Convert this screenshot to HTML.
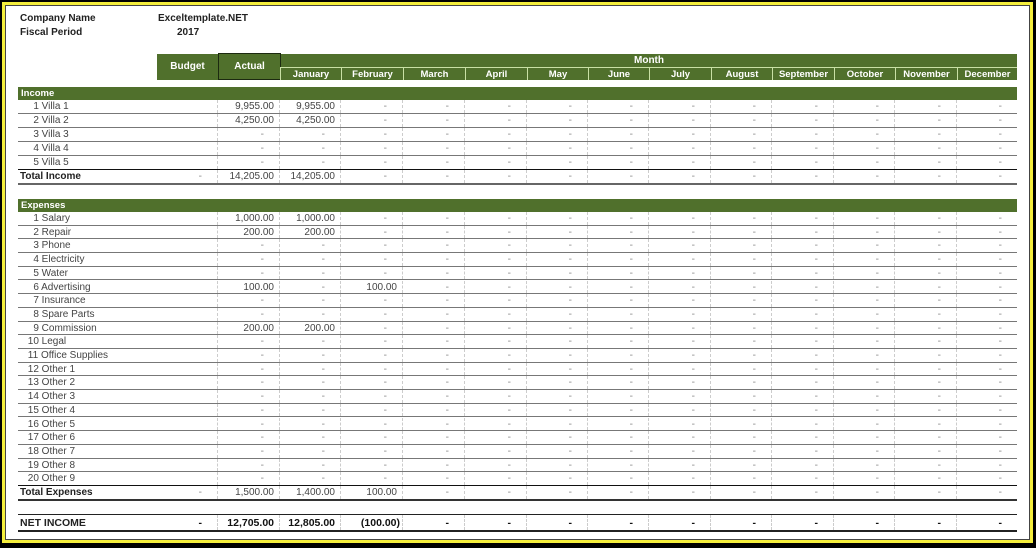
<!DOCTYPE html>
<html><head><meta charset="utf-8"><style>
*{margin:0;padding:0;box-sizing:border-box}
body{width:1036px;height:548px;background:#000;position:relative;overflow:hidden;font-family:"Liberation Sans",sans-serif}
#frame{position:absolute;left:2px;top:2px;width:1031px;height:541px;border:3px solid #f4ee3c;background:#fff}
#frame2{position:absolute;left:5px;top:5px;width:1025px;height:535px;border:1px solid #444}
.abs{position:absolute}
.top{font-size:10px;font-weight:bold;color:#222}
.r{position:absolute;left:18px;width:999px;display:flex;font-size:10px;color:#444;border-bottom:1px solid #777}
.r span{display:block;border-right:1px dashed #ccc;text-align:right;padding-right:5px;white-space:nowrap;overflow:hidden;line-height:13px}
.r span:first-child{text-align:left;border-right:none;padding-left:7px}
.r span.b{padding-left:2px}
.r span:last-child{border-right:none}
.w0{width:139px}.w1{width:61px}.w2{width:62px}
.d{padding-right:15px!important;color:#888}
.hd{position:absolute;left:18px;width:999px;height:13px;background:#50702c;color:#fff;font-weight:bold;font-size:9.5px;padding-left:3px;line-height:13px}
.m{position:absolute;top:67px;height:13px;color:#fff;font-weight:bold;font-size:9.5px;text-align:center;line-height:13px;border-left:1px solid #c9e0a5;border-top:1px solid #c9e0a5}
.b{font-weight:bold;color:#222}
.n span.d{color:#111}
</style></head><body>
<div id="frame"></div><div id="frame2"></div>
<div class="abs top" style="left:20px;top:13px">Company Name</div>
<div class="abs top" style="left:20px;top:27px">Fiscal Period</div>
<div class="abs top" style="left:158px;top:13px">Exceltemplate.NET</div>
<div class="abs top" style="left:177px;top:27px">2017</div>

<div class="abs" style="left:157px;top:54px;width:860px;height:26px;background:#50702c"></div>
<div class="abs" style="left:157px;top:54px;width:61px;height:26px;color:#fff;font-weight:bold;font-size:10px;text-align:center;line-height:26px">Budget</div>
<div class="abs" style="left:218px;top:53px;width:63px;height:27px;border:1px solid #1c2a10;color:#fff;font-weight:bold;font-size:10px;text-align:center;line-height:25px">Actual</div>
<div class="abs" style="left:281px;top:54px;width:736px;height:12px;color:#fff;font-weight:bold;font-size:10px;text-align:center;line-height:13px">Month</div>
<div class="m" style="left:280px;width:61px">January</div>
<div class="m" style="left:341px;width:62px">February</div>
<div class="m" style="left:403px;width:62px">March</div>
<div class="m" style="left:465px;width:62px">April</div>
<div class="m" style="left:527px;width:61px">May</div>
<div class="m" style="left:588px;width:61px">June</div>
<div class="m" style="left:649px;width:62px">July</div>
<div class="m" style="left:711px;width:61px">August</div>
<div class="m" style="left:772px;width:62px">September</div>
<div class="m" style="left:834px;width:61px">October</div>
<div class="m" style="left:895px;width:62px">November</div>
<div class="m" style="left:957px;width:60px">December</div>

<div class="hd" style="top:87px">Income</div>
<div class="hd" style="top:199px">Expenses</div>

<div class="r" style="top:100px;height:14px"><span class="w0">&nbsp;&nbsp;&nbsp;1 Villa 1</span><span class="w1"></span><span class="w2">9,955.00</span><span class="w1">9,955.00</span><span class="w2 d">-</span><span class="w2 d">-</span><span class="w2 d">-</span><span class="w1 d">-</span><span class="w1 d">-</span><span class="w2 d">-</span><span class="w1 d">-</span><span class="w2 d">-</span><span class="w1 d">-</span><span class="w2 d">-</span><span class="w1 d" style="width:60px">-</span></div>
<div class="r" style="top:114px;height:14px"><span class="w0">&nbsp;&nbsp;&nbsp;2 Villa 2</span><span class="w1"></span><span class="w2">4,250.00</span><span class="w1">4,250.00</span><span class="w2 d">-</span><span class="w2 d">-</span><span class="w2 d">-</span><span class="w1 d">-</span><span class="w1 d">-</span><span class="w2 d">-</span><span class="w1 d">-</span><span class="w2 d">-</span><span class="w1 d">-</span><span class="w2 d">-</span><span class="w1 d" style="width:60px">-</span></div>
<div class="r" style="top:128px;height:14px"><span class="w0">&nbsp;&nbsp;&nbsp;3 Villa 3</span><span class="w1"></span><span class="w2 d">-</span><span class="w1 d">-</span><span class="w2 d">-</span><span class="w2 d">-</span><span class="w2 d">-</span><span class="w1 d">-</span><span class="w1 d">-</span><span class="w2 d">-</span><span class="w1 d">-</span><span class="w2 d">-</span><span class="w1 d">-</span><span class="w2 d">-</span><span class="w1 d" style="width:60px">-</span></div>
<div class="r" style="top:142px;height:14px"><span class="w0">&nbsp;&nbsp;&nbsp;4 Villa 4</span><span class="w1"></span><span class="w2 d">-</span><span class="w1 d">-</span><span class="w2 d">-</span><span class="w2 d">-</span><span class="w2 d">-</span><span class="w1 d">-</span><span class="w1 d">-</span><span class="w2 d">-</span><span class="w1 d">-</span><span class="w2 d">-</span><span class="w1 d">-</span><span class="w2 d">-</span><span class="w1 d" style="width:60px">-</span></div>
<div class="r" style="top:156px;height:14px;border-bottom-color:#111"><span class="w0">&nbsp;&nbsp;&nbsp;5 Villa 5</span><span class="w1"></span><span class="w2 d">-</span><span class="w1 d">-</span><span class="w2 d">-</span><span class="w2 d">-</span><span class="w2 d">-</span><span class="w1 d">-</span><span class="w1 d">-</span><span class="w2 d">-</span><span class="w1 d">-</span><span class="w2 d">-</span><span class="w1 d">-</span><span class="w2 d">-</span><span class="w1 d" style="width:60px">-</span></div>
<div class="r" style="top:170px;height:15px;border-bottom:2px solid #666"><span class="w0 b">Total Income</span><span class="w1 d">-</span><span class="w2">14,205.00</span><span class="w1">14,205.00</span><span class="w2 d">-</span><span class="w2 d">-</span><span class="w2 d">-</span><span class="w1 d">-</span><span class="w1 d">-</span><span class="w2 d">-</span><span class="w1 d">-</span><span class="w2 d">-</span><span class="w1 d">-</span><span class="w2 d">-</span><span class="w1 d" style="width:60px">-</span></div>

<div class="r" style="top:212px;height:13.7px"><span class="w0">&nbsp;&nbsp;&nbsp;1 Salary</span><span class="w1"></span><span class="w2">1,000.00</span><span class="w1">1,000.00</span><span class="w2 d">-</span><span class="w2 d">-</span><span class="w2 d">-</span><span class="w1 d">-</span><span class="w1 d">-</span><span class="w2 d">-</span><span class="w1 d">-</span><span class="w2 d">-</span><span class="w1 d">-</span><span class="w2 d">-</span><span class="w1 d" style="width:60px">-</span></div>
<div class="r" style="top:225.7px;height:13.7px"><span class="w0">&nbsp;&nbsp;&nbsp;2 Repair</span><span class="w1"></span><span class="w2">200.00</span><span class="w1">200.00</span><span class="w2 d">-</span><span class="w2 d">-</span><span class="w2 d">-</span><span class="w1 d">-</span><span class="w1 d">-</span><span class="w2 d">-</span><span class="w1 d">-</span><span class="w2 d">-</span><span class="w1 d">-</span><span class="w2 d">-</span><span class="w1 d" style="width:60px">-</span></div>
<div class="r" style="top:239.4px;height:13.7px"><span class="w0">&nbsp;&nbsp;&nbsp;3 Phone</span><span class="w1"></span><span class="w2 d">-</span><span class="w1 d">-</span><span class="w2 d">-</span><span class="w2 d">-</span><span class="w2 d">-</span><span class="w1 d">-</span><span class="w1 d">-</span><span class="w2 d">-</span><span class="w1 d">-</span><span class="w2 d">-</span><span class="w1 d">-</span><span class="w2 d">-</span><span class="w1 d" style="width:60px">-</span></div>
<div class="r" style="top:253.1px;height:13.7px"><span class="w0">&nbsp;&nbsp;&nbsp;4 Electricity</span><span class="w1"></span><span class="w2 d">-</span><span class="w1 d">-</span><span class="w2 d">-</span><span class="w2 d">-</span><span class="w2 d">-</span><span class="w1 d">-</span><span class="w1 d">-</span><span class="w2 d">-</span><span class="w1 d">-</span><span class="w2 d">-</span><span class="w1 d">-</span><span class="w2 d">-</span><span class="w1 d" style="width:60px">-</span></div>
<div class="r" style="top:266.8px;height:13.7px"><span class="w0">&nbsp;&nbsp;&nbsp;5 Water</span><span class="w1"></span><span class="w2 d">-</span><span class="w1 d">-</span><span class="w2 d">-</span><span class="w2 d">-</span><span class="w2 d">-</span><span class="w1 d">-</span><span class="w1 d">-</span><span class="w2 d">-</span><span class="w1 d">-</span><span class="w2 d">-</span><span class="w1 d">-</span><span class="w2 d">-</span><span class="w1 d" style="width:60px">-</span></div>
<div class="r" style="top:280.5px;height:13.7px"><span class="w0">&nbsp;&nbsp;&nbsp;6 Advertising</span><span class="w1"></span><span class="w2">100.00</span><span class="w1 d">-</span><span class="w2">100.00</span><span class="w2 d">-</span><span class="w2 d">-</span><span class="w1 d">-</span><span class="w1 d">-</span><span class="w2 d">-</span><span class="w1 d">-</span><span class="w2 d">-</span><span class="w1 d">-</span><span class="w2 d">-</span><span class="w1 d" style="width:60px">-</span></div>
<div class="r" style="top:294.2px;height:13.7px"><span class="w0">&nbsp;&nbsp;&nbsp;7 Insurance</span><span class="w1"></span><span class="w2 d">-</span><span class="w1 d">-</span><span class="w2 d">-</span><span class="w2 d">-</span><span class="w2 d">-</span><span class="w1 d">-</span><span class="w1 d">-</span><span class="w2 d">-</span><span class="w1 d">-</span><span class="w2 d">-</span><span class="w1 d">-</span><span class="w2 d">-</span><span class="w1 d" style="width:60px">-</span></div>
<div class="r" style="top:307.9px;height:13.7px"><span class="w0">&nbsp;&nbsp;&nbsp;8 Spare Parts</span><span class="w1"></span><span class="w2 d">-</span><span class="w1 d">-</span><span class="w2 d">-</span><span class="w2 d">-</span><span class="w2 d">-</span><span class="w1 d">-</span><span class="w1 d">-</span><span class="w2 d">-</span><span class="w1 d">-</span><span class="w2 d">-</span><span class="w1 d">-</span><span class="w2 d">-</span><span class="w1 d" style="width:60px">-</span></div>
<div class="r" style="top:321.6px;height:13.7px"><span class="w0">&nbsp;&nbsp;&nbsp;9 Commission</span><span class="w1"></span><span class="w2">200.00</span><span class="w1">200.00</span><span class="w2 d">-</span><span class="w2 d">-</span><span class="w2 d">-</span><span class="w1 d">-</span><span class="w1 d">-</span><span class="w2 d">-</span><span class="w1 d">-</span><span class="w2 d">-</span><span class="w1 d">-</span><span class="w2 d">-</span><span class="w1 d" style="width:60px">-</span></div>
<div class="r" style="top:335.3px;height:13.7px"><span class="w0">&nbsp;10 Legal</span><span class="w1"></span><span class="w2 d">-</span><span class="w1 d">-</span><span class="w2 d">-</span><span class="w2 d">-</span><span class="w2 d">-</span><span class="w1 d">-</span><span class="w1 d">-</span><span class="w2 d">-</span><span class="w1 d">-</span><span class="w2 d">-</span><span class="w1 d">-</span><span class="w2 d">-</span><span class="w1 d" style="width:60px">-</span></div>
<div class="r" style="top:349px;height:13.7px"><span class="w0">&nbsp;11 Office Supplies</span><span class="w1"></span><span class="w2 d">-</span><span class="w1 d">-</span><span class="w2 d">-</span><span class="w2 d">-</span><span class="w2 d">-</span><span class="w1 d">-</span><span class="w1 d">-</span><span class="w2 d">-</span><span class="w1 d">-</span><span class="w2 d">-</span><span class="w1 d">-</span><span class="w2 d">-</span><span class="w1 d" style="width:60px">-</span></div>
<div class="r" style="top:362.7px;height:13.7px"><span class="w0">&nbsp;12 Other 1</span><span class="w1"></span><span class="w2 d">-</span><span class="w1 d">-</span><span class="w2 d">-</span><span class="w2 d">-</span><span class="w2 d">-</span><span class="w1 d">-</span><span class="w1 d">-</span><span class="w2 d">-</span><span class="w1 d">-</span><span class="w2 d">-</span><span class="w1 d">-</span><span class="w2 d">-</span><span class="w1 d" style="width:60px">-</span></div>
<div class="r" style="top:376.4px;height:13.7px"><span class="w0">&nbsp;13 Other 2</span><span class="w1"></span><span class="w2 d">-</span><span class="w1 d">-</span><span class="w2 d">-</span><span class="w2 d">-</span><span class="w2 d">-</span><span class="w1 d">-</span><span class="w1 d">-</span><span class="w2 d">-</span><span class="w1 d">-</span><span class="w2 d">-</span><span class="w1 d">-</span><span class="w2 d">-</span><span class="w1 d" style="width:60px">-</span></div>
<div class="r" style="top:390.1px;height:13.7px"><span class="w0">&nbsp;14 Other 3</span><span class="w1"></span><span class="w2 d">-</span><span class="w1 d">-</span><span class="w2 d">-</span><span class="w2 d">-</span><span class="w2 d">-</span><span class="w1 d">-</span><span class="w1 d">-</span><span class="w2 d">-</span><span class="w1 d">-</span><span class="w2 d">-</span><span class="w1 d">-</span><span class="w2 d">-</span><span class="w1 d" style="width:60px">-</span></div>
<div class="r" style="top:403.8px;height:13.7px"><span class="w0">&nbsp;15 Other 4</span><span class="w1"></span><span class="w2 d">-</span><span class="w1 d">-</span><span class="w2 d">-</span><span class="w2 d">-</span><span class="w2 d">-</span><span class="w1 d">-</span><span class="w1 d">-</span><span class="w2 d">-</span><span class="w1 d">-</span><span class="w2 d">-</span><span class="w1 d">-</span><span class="w2 d">-</span><span class="w1 d" style="width:60px">-</span></div>
<div class="r" style="top:417.5px;height:13.7px"><span class="w0">&nbsp;16 Other 5</span><span class="w1"></span><span class="w2 d">-</span><span class="w1 d">-</span><span class="w2 d">-</span><span class="w2 d">-</span><span class="w2 d">-</span><span class="w1 d">-</span><span class="w1 d">-</span><span class="w2 d">-</span><span class="w1 d">-</span><span class="w2 d">-</span><span class="w1 d">-</span><span class="w2 d">-</span><span class="w1 d" style="width:60px">-</span></div>
<div class="r" style="top:431.2px;height:13.7px"><span class="w0">&nbsp;17 Other 6</span><span class="w1"></span><span class="w2 d">-</span><span class="w1 d">-</span><span class="w2 d">-</span><span class="w2 d">-</span><span class="w2 d">-</span><span class="w1 d">-</span><span class="w1 d">-</span><span class="w2 d">-</span><span class="w1 d">-</span><span class="w2 d">-</span><span class="w1 d">-</span><span class="w2 d">-</span><span class="w1 d" style="width:60px">-</span></div>
<div class="r" style="top:444.9px;height:13.7px"><span class="w0">&nbsp;18 Other 7</span><span class="w1"></span><span class="w2 d">-</span><span class="w1 d">-</span><span class="w2 d">-</span><span class="w2 d">-</span><span class="w2 d">-</span><span class="w1 d">-</span><span class="w1 d">-</span><span class="w2 d">-</span><span class="w1 d">-</span><span class="w2 d">-</span><span class="w1 d">-</span><span class="w2 d">-</span><span class="w1 d" style="width:60px">-</span></div>
<div class="r" style="top:458.6px;height:13.7px"><span class="w0">&nbsp;19 Other 8</span><span class="w1"></span><span class="w2 d">-</span><span class="w1 d">-</span><span class="w2 d">-</span><span class="w2 d">-</span><span class="w2 d">-</span><span class="w1 d">-</span><span class="w1 d">-</span><span class="w2 d">-</span><span class="w1 d">-</span><span class="w2 d">-</span><span class="w1 d">-</span><span class="w2 d">-</span><span class="w1 d" style="width:60px">-</span></div>
<div class="r" style="top:472.3px;height:13.7px;border-bottom-color:#111"><span class="w0">&nbsp;20 Other 9</span><span class="w1"></span><span class="w2 d">-</span><span class="w1 d">-</span><span class="w2 d">-</span><span class="w2 d">-</span><span class="w2 d">-</span><span class="w1 d">-</span><span class="w1 d">-</span><span class="w2 d">-</span><span class="w1 d">-</span><span class="w2 d">-</span><span class="w1 d">-</span><span class="w2 d">-</span><span class="w1 d" style="width:60px">-</span></div>
<div class="r" style="top:486px;height:15px;border-bottom:2px solid #333"><span class="w0 b">Total Expenses</span><span class="w1 d">-</span><span class="w2">1,500.00</span><span class="w1">1,400.00</span><span class="w2">100.00</span><span class="w2 d">-</span><span class="w2 d">-</span><span class="w1 d">-</span><span class="w1 d">-</span><span class="w2 d">-</span><span class="w1 d">-</span><span class="w2 d">-</span><span class="w1 d">-</span><span class="w2 d">-</span><span class="w1 d" style="width:60px">-</span></div>

<div class="r n" style="top:514px;height:18px;border-top:1px solid #222;border-bottom:2px solid #222;font-size:10.5px;color:#111;font-weight:bold"><span class="w0 b" style="line-height:16px">NET INCOME</span><span class="w1 d" style="line-height:16px">-</span><span class="w2" style="line-height:16px">12,705.00</span><span class="w1" style="line-height:16px">12,805.00</span><span class="w2" style="line-height:16px;padding-right:2px">(100.00)</span><span class="w2 d" style="line-height:16px">-</span><span class="w2 d" style="line-height:16px">-</span><span class="w1 d" style="line-height:16px">-</span><span class="w1 d" style="line-height:16px">-</span><span class="w2 d" style="line-height:16px">-</span><span class="w1 d" style="line-height:16px">-</span><span class="w2 d" style="line-height:16px">-</span><span class="w1 d" style="line-height:16px">-</span><span class="w2 d" style="line-height:16px">-</span><span class="w1 d" style="width:60px;line-height:16px">-</span></div>
</body></html>
